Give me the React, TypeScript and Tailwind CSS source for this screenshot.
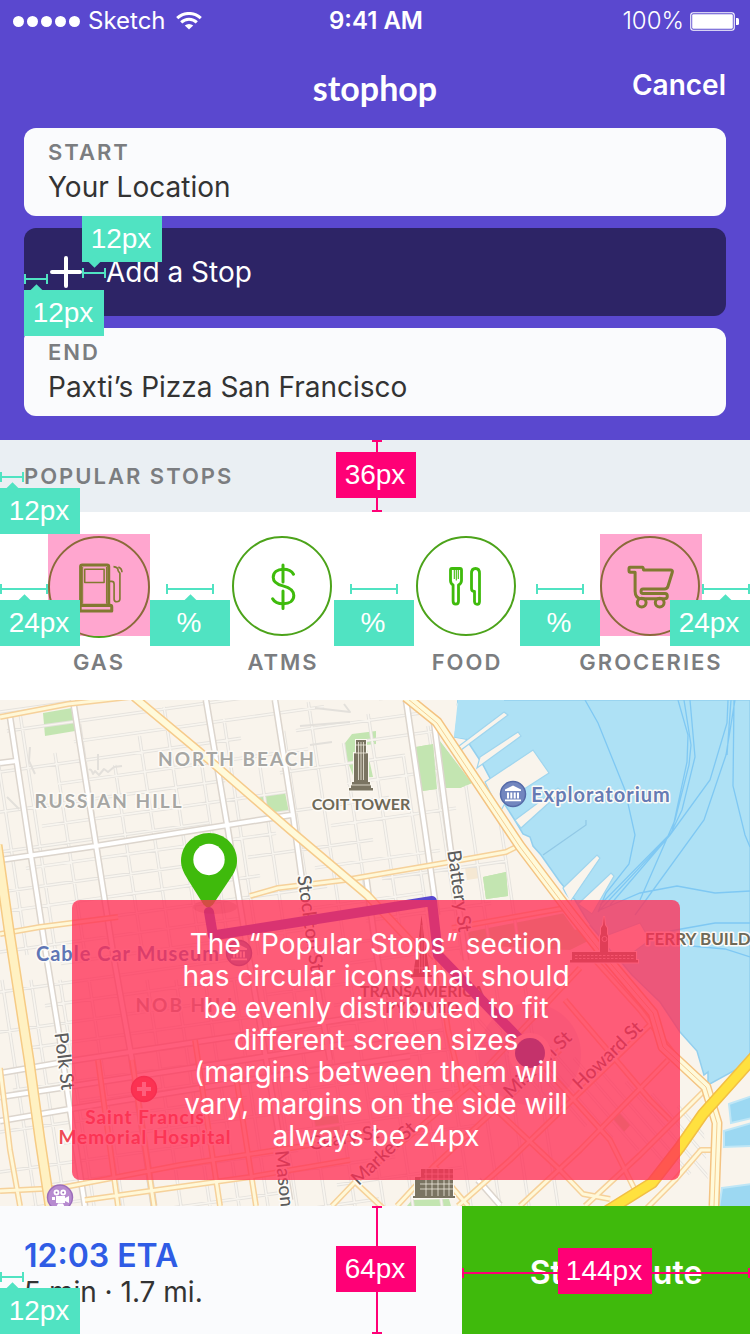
import type { ReactNode } from 'react';

const SANS = "font-['Inter','Noto_Sans',sans-serif]";
const CAPTION = 'text-[22px] leading-7 font-semibold tracking-[2px] text-[#7b7d80]';

/* ---------- spec annotations ---------- */

type TagProps = { text: string; place: string; pointer?: string; tone?: 'teal' | 'pink' };

function Tag({ text, place, pointer, tone = 'teal' }: TagProps) {
  const bg = tone === 'teal' ? 'bg-[#50e3c2]' : 'bg-[#ff0076]';
  return (
    <div
      className={`absolute z-20 flex h-[46px] items-center justify-center font-['Liberation_Sans',Arial,sans-serif] text-[28px] leading-8 text-white ${bg} ${place}`}
    >
      {pointer && <span className={`absolute size-[9px] rotate-45 bg-[#50e3c2] ${pointer}`} />}
      <span className="relative pr-0.5">{text}</span>
    </div>
  );
}

function HSpan({ place, tone = 'teal' }: { place: string; tone?: 'teal' | 'pink' }) {
  const border = tone === 'teal' ? 'border-[#50e3c2]' : 'border-[#ff0076]';
  const bg = tone === 'teal' ? 'bg-[#50e3c2]' : 'bg-[#ff0076]';
  return (
    <div className={`absolute z-10 flex h-2.5 items-center border-x-2 ${border} ${place}`}>
      <span className={`h-0.5 w-full ${bg}`} />
    </div>
  );
}

function VSpan() {
  return (
    <div className="absolute inset-y-0 left-[372px] z-10 flex w-2.5 justify-center border-y-2 border-[#ff0076]">
      <span className="h-full w-0.5 bg-[#ff0076]" />
    </div>
  );
}

/* ---------- header ---------- */

function StatusBar() {
  return (
    <div className="grid h-10 grid-cols-3 items-center pr-[11px] pl-[13px] pt-0.5 text-2xl text-white">
      <div className="flex items-center">
        <div className="flex gap-[3px]">
          {[0, 1, 2, 3, 4].map((i) => (
            <span key={i} className="size-[11px] rounded-full bg-white" />
          ))}
        </div>
        <span className="ml-2">Sketch</span>
        <svg className="ml-2.5 h-[18px] w-[26px]" viewBox="0 0 26 18" fill="none" stroke="#fff" strokeWidth="3">
          <path d="M1.2 6.2a17 17 0 0 1 23.6 0" />
          <path d="M5.2 10.4a11.2 11.2 0 0 1 15.6 0" />
          <path d="M13 17.6 8.8 13.6a6.2 6.2 0 0 1 8.4 0z" fill="#fff" stroke="none" />
        </svg>
      </div>
      <span className="text-center font-semibold">9:41 AM</span>
      <div className="flex items-center justify-end gap-[6px]">
        <span className="font-light">100%</span>
        <svg className="h-[19px] w-[49px]" viewBox="0 0 49 19">
          <rect x=".75" y=".75" width="43.5" height="17.5" rx="2.5" fill="none" stroke="#fff" strokeWidth="1.1" />
          <rect x="2.2" y="2.2" width="40.6" height="14.6" rx="1.2" fill="#fff" />
          <path d="M46 6h1.500q1.500 0 1.500 1.500v4q0 1.500-1.500 1.500H46z" fill="#fff" />
        </svg>
      </div>
    </div>
  );
}

function Field({ id, label, value }: { id: string; label: string; value: string }) {
  return (
    <div className="flex h-[88px] flex-col rounded-xl bg-[#fafbfd] px-6 pt-2.5">
      <label htmlFor={id} className={CAPTION}>
        {label}
      </label>
      <input
        id={id}
        defaultValue={value}
        className="h-[42px] w-full bg-transparent text-[28px] leading-[42px] text-[#333] outline-none"
      />
    </div>
  );
}

function Header() {
  return (
    <header className="relative bg-[#5a48cf] pb-6">
      <StatusBar />
      <div className="grid h-[88px] grid-cols-3 items-center px-6 text-white">
        <span />
        <h1 className="pt-2 text-center font-['Lato',sans-serif] text-[34px] leading-10 font-bold">stophop</h1>
        <button type="button" className="justify-self-end pt-0.5 text-[28px] leading-8 font-semibold">
          Cancel
        </button>
      </div>
      <div className="flex flex-col gap-3 px-6">
        <Field id="start" label="START" value="Your Location" />
        <button type="button" className="flex h-[88px] items-center rounded-xl bg-[#2d2466] px-[26px] text-[28px] text-white">
          <svg className="mr-6 size-8" viewBox="0 0 32 32" stroke="#fff" strokeWidth="4" strokeLinecap="round">
            <path d="M16 2v28M2 16h28" />
          </svg>
          Add a Stop
        </button>
        <Field id="end" label="END" value="Paxti’s Pizza San Francisco" />
      </div>
      <HSpan place="top-[268px] left-[82px] w-6" />
      <Tag text="12px" place="top-[216px] left-[82px] w-20" pointer="bottom-[-4px] left-2" />
      <HSpan place="top-[274px] left-6 w-6" />
      <Tag text="12px" place="top-[290px] left-6 w-20" pointer="top-[-4px] left-2" />
    </header>
  );
}

/* ---------- popular stops ---------- */

const gasIcon = (
  <svg viewBox="49 537 100 100" fill="none" stroke="#3fba0c" strokeWidth="3" strokeLinejoin="round">
    <path d="M81 605V567q0-1.500 1.500-1.500H107q1.500 0 1.500 1.500v37.500" />
    <path d="M80.500 610.500v-5.500h29.500q1.500 0 1.500 1.500v4z" />
    <rect x="85" y="569.500" width="19" height="13" strokeWidth="1.500" />
    <path d="M83 567.500v36M106.300 567.500v36" strokeWidth="1" />
    <path
      d="M109 581.500h2.500q2.300 0 2.300 2.500v15q0 2.500 2.700 2.500t3-2.500v-25.500l-1.700-2.300q0-3.700-4.600-4.200M118 567.500q3.500 1.500 3.500 5"
      strokeWidth="1.600"
    />
  </svg>
);

const atmIcon = (
  <svg viewBox="231.5 536 100 100" fill="none" stroke="#3fbb0c" strokeWidth="3" strokeLinecap="round">
    <path d="M293 574.200c-2-3.700-5.800-5-10.300-5-6 0-10 3.200-10 8 0 5.300 4.200 7.300 9.800 8.700 6.300 1.600 10.800 4 10.800 9.700 0 5.200-4.200 8.200-10.500 8.200-5 0-9-1.700-10.700-5" />
    <path d="M282.500 565v17M282.500 591v17.500" />
  </svg>
);

const foodIcon = (
  <svg viewBox="416 536 100 100" fill="none" stroke="#3fbb0c" strokeWidth="2.800" strokeLinejoin="round">
    <path d="M452 568.500h8q1.500 0 1.500 1.500v10.500q0 3-3 4.500v16q0 3.200-2.700 3.200t-2.700-3.200v-16q-2.600-1.500-2.600-4.500V570q0-1.500 1.500-1.500z" />
    <path d="M454.300 568.500v10.500M456.300 568.500v12M458.300 568.500v10.500" strokeWidth="1.100" />
    <path d="M471.500 573.500q0-5 4-5t4 5v28q0 2.800-2.400 2.800t-2.600-2.800v-10q-3 0-3-3z" />
  </svg>
);

const groceriesIcon = (
  <svg viewBox="600 536 100 100" fill="none" stroke="#3fbb0c" strokeWidth="3" strokeLinejoin="round">
    <path d="M630 567.300h12.500q.8 0 1 2.700h27q2.500 0 1.800 2.300l-4.300 14q-.8 2.700-3.500 2.700h-21.500q-2 0-2 2.300t2 2.300h22q2.300 0 2.300 2.600t-2.500 2.600h-22.500q-7.200 0-7.200-7.500v-19h-4.800q-1.300 0-1.300-1.500v-2q0-1.500 1-1.500z" />
    <circle cx="641.700" cy="602.600" r="4.400" />
    <circle cx="659.700" cy="602.600" r="4.400" />
  </svg>
);

type StopKind = { name: string; icon: ReactNode; size: string };

const stops: StopKind[] = [
  { name: 'GAS', icon: gasIcon, size: 'size-[102px]' },
  { name: 'ATMS', icon: atmIcon, size: 'size-[100px]' },
  { name: 'FOOD', icon: foodIcon, size: 'size-[100px]' },
  { name: 'GROCERIES', icon: groceriesIcon, size: 'size-[100px]' },
];

function PopularStops() {
  return (
    <section>
      <div className="relative flex h-[72px] items-center bg-[#eaeff3] px-6">
        <h2 className={CAPTION}>POPULAR STOPS</h2>
        <HSpan place="top-8 left-0 w-6" />
        <Tag text="12px" place="top-12 left-0 w-20" pointer="top-[-4px] left-2" />
        <VSpan />
        <Tag text="36px" place="top-3 left-[336px] w-20" tone="pink" />
      </div>
      <div className="relative flex h-[188px] justify-between bg-white pt-6 pr-[50px] pl-12">
        {stops.map((s) => (
          <button key={s.name} type="button" className="flex w-[100px] flex-col items-center">
            <span className="h-[112px] w-[100px]">
              <span className={`block rounded-full border-2 border-[#4ca31a] ${s.size}`}>
                <span className="-m-0.5 block">{s.icon}</span>
              </span>
            </span>
            <span className={`${CAPTION} pl-0.5 whitespace-nowrap`}>{s.name}</span>
          </button>
        ))}
        <div className="absolute top-[22px] left-12 size-[102px] bg-[#ff0076]/35" />
        <div className="absolute top-[22px] right-12 size-[102px] bg-[#ff0076]/35" />
        <HSpan place="top-[72px] left-0 w-12" />
        <Tag text="24px" place="top-[88px] left-0 w-20" pointer="top-[-4px] left-5" />
        <HSpan place="top-[72px] left-[166px] w-12" />
        <Tag text="%" place="top-[88px] left-[150px] w-20" pointer="top-[-4px] left-9" />
        <HSpan place="top-[72px] left-[350px] w-12" />
        <Tag text="%" place="top-[88px] left-[334px] w-20" />
        <HSpan place="top-[72px] left-[536px] w-12" />
        <Tag text="%" place="top-[88px] left-[520px] w-20" />
        <HSpan place="top-[72px] right-0 w-12" />
        <Tag text="24px" place="top-[88px] right-0 w-20" pointer="top-[-4px] right-5" />
      </div>
    </section>
  );
}

/* ---------- map ---------- */

const minorStreets: string[] = [];
for (let i = 0; i < 30; i++) {
  const y = 712 + i * 20;
  const start = (i * 67) % 150;
  minorStreets.push(`M${start - 60} ${y - (start - 60) * 0.14}L${start + 190} ${y - (start + 190) * 0.14}`);
  minorStreets.push(`M${start + 245} ${y - (start + 245) * 0.14}L${start + 370} ${y - (start + 370) * 0.14}`);
}
for (let i = 0; i < 19; i++) {
  const x = -40 + i * 29;
  const top = 700 + ((i * 41) % 70);
  minorStreets.push(`M${x + (top - 700) * 0.15} ${top}L${x + 38} 955`);
  minorStreets.push(`M${x + 42} ${980}L${x + 76} 1206`);
}
for (let i = 0; i < 9; i++) {
  minorStreets.push(`M${470 + i * 26} ${1010 + i * 12}l90 104`);
}

const whiteRoads = [
  'M10 717 31 856 47 960 60 1040 70 1110 85 1206',
  'M73 700 96 845 115 965 132 1060 154 1206',
  'M206 700 228 830 245 935 290 1200',
  'M275 700 293 815 302 880 312 955 330 1060',
  'M0 860 96 846 291 815',
  'M0 763 16 761',
  'M406 700 425 830 437 915',
  'M434 722 450 845 466 960',
  'M366 876 376 950 386 1010',
  'M0 1073 70 1061 250 1034 370 1015',
  'M0 1097 60 1088 250 1059 400 1035',
  'M0 1121 70 1109 250 1080 410 1056',
  'M478 1180 500 1205',
];

const yellowRoads = [
  'M0 717 68 704 130 697',
  'M250 896 278 888 345 880 450 862 506 852 520 845',
  'M0 934 40 927 118 917',
  'M0 1191 60 1188 180 1165 375 1135',
  'M85 1200 250 1177 350 1160',
  'M0 1068 10 1150 20 1206',
  'M98 1060 118 1206',
  'M132 1060 154 1206',
  'M195 1040 220 1206',
  'M235 1070 256 1206',
  'M332 1206 355 1182 470 1085 580 968',
  'M355 1182 385 1210',
  'M397 1206 434 1166 560 1050',
  'M434 1166 468 1206',
  'M458 1206 510 1160 655 1020',
  'M520 1206 580 1150 668 1060',
  'M585 1206 640 1155 707 1088',
  'M470 1085 560 1170 583 1194 610 1199',
  'M520 1040 610 1140 635 1190',
  'M565 1000 650 1100 670 1120',
  'M595 960 640 1010 690 1075',
  'M430 905 448 1030 462 1090',
  'M645 1210 675 1180 701 1150 717 1150',
  'M452 928 565 908',
];

const ferryLines = [
  'M585 700 598 723 625 790 635 835 629 864 606 893 598 912',
  'M678 700 688 735 687 762 672 832 600 905',
  'M684 700 691 745 689 765 675 820 640 900',
  'M690 700 695 757 682 810 670 835 598 912',
  'M728 700 727 723 710 780 670 835 610 905',
  'M735 700 726 755 704 820 635 915',
  'M731 700 727 755',
  'M734 700 733 786 745 835 750 847',
  'M600 910 640 893 677 886 715 893 750 891',
  'M670 931 715 923 750 923',
  'M680 945 725 949 750 957',
];

const piers = [
  '459,746 504,712 508,715 461,750',
  '480,757 518,732 521,736 477,768',
  '485,782 533,750 549,773 507,800 500,812',
  '515,820 558,788 562,791 521,828',
  '563,888 597,855 600,858 570,902',
  '578,904 611,873 614,876 592,914',
  '600,938 640,923 650,940 620,962',
];

const parks = [
  '43,713 72,708 75,731 45,736',
  '257,796 285,792 289,813 274,814',
  '345,743 352,734 376,731 376,744 366,745 373,777 354,778 346,757',
  '416,747 433,744 437,789 422,791',
  '439,740 472,783 460,788 445,788',
  '483,877 506,872 508,896 486,899',
  '468,932 570,912 590,940 570,950 470,945',
  '312,1118 338,1115 340,1130 318,1134',
  '618,1112 632,1123 624,1132 612,1120',
  '412,1200 449,1199 451,1206 407,1206',
];

type MapLabel = {
  t: string;
  x: number;
  y: number;
  size: number;
  fill: string;
  spacing?: number;
  turn?: number;
  weight?: number;
};

const mapLabels: MapLabel[] = [
  { t: 'NORTH BEACH', x: 237, y: 766, size: 19, fill: '#a6a6a3', spacing: 2 },
  { t: 'RUSSIAN HILL', x: 109, y: 808, size: 19, fill: '#a6a6a3', spacing: 2 },
  { t: 'NOB HILL', x: 187, y: 1012, size: 19, fill: '#a6a6a3', spacing: 2 },
  { t: 'COIT TOWER', x: 361, y: 810, size: 16, fill: '#6e6957' },
  { t: 'TRANSAMERICA', x: 422, y: 997, size: 16, fill: '#6e6957' },
  { t: 'PYRAMID', x: 422, y: 1013, size: 16, fill: '#6e6957' },
  { t: 'FERRY BUILDING', x: 713, y: 945, size: 17, fill: '#6e6957' },
  { t: 'Exploratorium', x: 601, y: 802, size: 20, fill: '#667bb4', spacing: 1 },
  { t: 'Cable Car Museum', x: 128, y: 961, size: 20, fill: '#5f76b5', spacing: 1 },
  { t: 'Saint Francis', x: 145, y: 1124, size: 19, fill: '#ee4b54', spacing: 1 },
  { t: 'Memorial Hospital', x: 145, y: 1144, size: 19, fill: '#ee4b54', spacing: 1 },
  { t: 'Battery St', x: 453, y: 892, size: 19, fill: '#5c5c5c', turn: 82 },
  { t: 'Stockton St', x: 304, y: 924, size: 19, fill: '#5c5c5c', turn: 82 },
  { t: 'Polk St', x: 58, y: 1062, size: 19, fill: '#5c5c5c', turn: 83 },
  { t: 'Mason St', x: 279, y: 1190, size: 19, fill: '#5c5c5c', turn: 84 },
  { t: 'Howard St', x: 612, y: 1060, size: 19, fill: '#5c5c5c', turn: -44 },
  { t: 'Mission St', x: 542, y: 1069, size: 19, fill: '#5c5c5c', turn: -44 },
  { t: 'Market St', x: 388, y: 1158, size: 19, fill: '#5c5c5c', turn: -44 },
  { t: 'Geary St', x: 345, y: 1144, size: 19, fill: '#5c5c5c', turn: -10 },
];

function Roads({ paths, casing, fill, width }: { paths: string[]; casing: string; fill: string; width: number }) {
  return (
    <>
      <path d={paths.join('')} stroke={casing} strokeWidth={width + 3} />
      <path d={paths.join('')} stroke={fill} strokeWidth={width} />
    </>
  );
}

function Museum({ x, y }: { x: number; y: number }) {
  return (
    <g transform={`translate(${x} ${y})`}>
      <circle r="12.500" fill="#7286bf" stroke="#556aa8" strokeWidth="1.500" />
      <path d="M-8-4.500 0-8.500 8-4.500v1.500H-8zM-6-1.500h2v6h-2zM-2.700-1.500h2v6h-2zM.7-1.500h2v6h-2zM4-1.500h2v6H4zM-8 5.500H8v1.800H-8z" fill="#fff" />
    </g>
  );
}

function Landmarks() {
  return (
    <>
      <g fill="#7a7462" stroke="#fbf8f1" strokeWidth="2" paintOrder="stroke">
        <path d="M356 740h10v13h2v29h2v3h1v3h2v2.500h-24v-2.500h2v-3h1v-3h2v-29h2z" />
        <path d="m421.500 915 2.500 22 6 38h2v2h-21v-2h2l6-38z" />
        <path d="M604 916l1 9 2 3v6l1 2v16h28v8h2v2.500h-68V960h2v-8h28v-16l1-2v-6l2-3z" />
        <path d="M421 1169h32v27h2v2h-42v-2h2v-19h6z" />
      </g>
      <g stroke="#efeadd" strokeWidth=".8" fill="none">
        <path d="M358.500 742v38M361 742v38M363.500 742v38M356 745h10M354 753h14M351 785h20" />
        <path d="M419.500 937v36M422 925v48M424.500 937v36M414 968h14" />
        <path d="M575 955.500h60M575 958.500h60" strokeDasharray="2.500 1.500" />
        <path d="M424 1174h29M420 1179h33M420 1184h33M420 1189h33M426 1169v27M432 1169v27M438 1169v27M444 1169v27M449 1169v27" />
        <circle cx="604.500" cy="939" r="2.500" />
      </g>
    </>
  );
}

function CityMap() {
  return (
    <svg
      className="absolute inset-0 size-full font-['Lato','Noto_Sans',sans-serif]"
      viewBox="0 700 750 506"
      preserveAspectRatio="xMidYMin slice"
      role="img"
      aria-label="Route map"
    >
      <rect y="700" width="750" height="506" fill="#f9f4ec" />
      {parks.map((p) => (
        <polygon key={p} points={p} fill="#c3e5b1" />
      ))}
      <polygon points="465,868 480,865 480,878 467,880" fill="#f5e8d3" />
      <g fill="none" strokeLinejoin="round">
        <path d={minorStreets.join('')} stroke="#e5e2dd" strokeWidth="3.400" />
        <path d={minorStreets.join('')} stroke="#f8f5ef" strokeWidth="1.600" />
        <path
          d="M89 770q2-2 4 4l2-3 4 4 5-6 4 3 6-5 8-1M98 754v16M30 747l-1 14 6 13M7 797l12 12M315 708l35 4 -6-8M300 726l50-4M310 745l22-3"
          stroke="#e3e0db"
          strokeWidth="2"
        />
      </g>
      <path
        d="M458 700 454 737 466 739 483 765 500 797 516 822 523 834 530 837 533 846 541 855 560 882 575 900 590 925 632 975 660 1002 680 1032 697 1051 704 1075 708 1072V1085L750 1062V700z"
        fill="#aee1f5"
        stroke="#93cfee"
        strokeWidth="1.500"
      />
      <polygon points="700,1084 720,1084 750,1066 750,1206 710,1206" fill="#f9f4ec" />
      <g fill="#9cd8f2" stroke="#bfe6f6" strokeWidth="2">
        <polygon points="729,1104 752,1096 752,1118 731,1123" />
        <polygon points="724,1131 752,1123 752,1146 724,1147" />
        <polygon points="722,1188 752,1184 752,1208 719,1208" />
      </g>
      {piers.map((p) => (
        <polygon key={p} points={p} fill="#f9f4ec" stroke="#9fd5ee" strokeWidth="1.200" />
      ))}
      <path d="M543 855 586 825V820" fill="none" stroke="#92c9e6" strokeWidth="1.300" />
      <path d="M459 700 454 738 485 790 530 850 575 906 590 925 575 930 440 740z" fill="#f9f4ec" />
      <path d="M458 699 454 737 466 739 504 711V699z" fill="#aee1f5" />
      <g fill="none" stroke="#7fc8f3" strokeWidth="1.300">
        <path d={ferryLines.join('')} />
      </g>
      {parks.slice(3, 6).map((p) => (
        <polygon key={p} points={p} fill="#c3e5b1" />
      ))}

      <g fill="none" strokeLinejoin="round">
        <Roads paths={whiteRoads} casing="#dcd5cd" fill="#ffffff" width={4} />
        <Roads paths={yellowRoads} casing="#f6d19a" fill="#fff8d8" width={3} />
        <Roads paths={['M134 697 200 752 290 830 367 895 430 962']} casing="#f6cb8c" fill="#fffada" width={6} />
        <Roads paths={['M-3 845 9 930 29 1060 40 1140 50 1206']} casing="#f6cb84" fill="#fff1c2" width={8} />
        <Roads
          paths={['M406 697 437 722 520 846 570 912 600 950 653 1013 663 1047 706 1087 717 1123 714 1206']}
          casing="#f4c382"
          fill="#fffada"
          width={8}
        />
        <path
          d="M408 699 437 723 520 847 570 913 600 951 653 1013 663 1047 706 1087 717 1123 714 1206"
          stroke="#f5cd90"
          strokeWidth="1"
        />
        <Roads paths={['M607 1211 652 1183 680 1147 703 1114 755 1056']} casing="#f2bf45" fill="#ffe13f" width={9} />
      </g>

      <Landmarks />

      {mapLabels.map((l) => (
        <text
          key={l.t}
          x={l.x}
          y={l.y}
          textAnchor="middle"
          fontSize={l.size}
          fontWeight={l.turn ? 500 : 700}
          letterSpacing={l.spacing ?? 0}
          fill={l.fill}
          stroke="#fdfbf7"
          strokeWidth="3"
          strokeLinejoin="round"
          paintOrder="stroke"
          transform={l.turn ? `rotate(${l.turn} ${l.x} ${l.y})` : undefined}
        >
          {l.t}
        </text>
      ))}
      <Museum x={513} y={794} />
      <Museum x={239} y={953} />
      <g transform="translate(144 1089)">
        <circle r="12.500" fill="#f0404c" stroke="#d92f40" strokeWidth="1.500" />
        <path d="M-2-7h4v5h5v4H2v5h-4V2h-5v-4h5z" fill="#fff" />
      </g>
      <g transform="translate(60 1197.500)">
        <circle r="12.500" fill="#b78bd0" stroke="#9c6dba" strokeWidth="1.500" />
        <g fill="#fff">
          <circle cx="-3.500" cy="-5" r="2.900" />
          <circle cx="3.200" cy="-5" r="2.900" />
          <path d="M-4-1.500h9v2l4-2v7l-4-2v2h-9zM-8-.5h3v3h-3zM-2 6h5l2 4h-9z" />
        </g>
        <g fill="#9c6dba">
          <circle cx="-3.500" cy="-5" r="1" />
          <circle cx="3.200" cy="-5" r="1" />
        </g>
      </g>

      {/* route */}
      <circle cx="530" cy="1054" r="51" fill="#5a48cf" opacity=".12" />
      <path
        d="M209 912 213 935.500 432 901 438 955 530 1050"
        fill="none"
        stroke="#5a48cf"
        strokeWidth="10"
        strokeLinecap="round"
        strokeLinejoin="round"
      />
      <circle cx="530" cy="1054" r="21" fill="#f7f2f1" />
      <circle cx="530" cy="1053" r="15" fill="#0042b4" />
      <ellipse cx="215" cy="907" rx="22" ry="7" fill="#000" opacity=".12" />
      <path d="M209 833c-15.500 0-28 12.200-28 27.700 0 7 3 12.300 6.500 18.300l16 25.500q4.500 5.500 9.500 0l17-25.500c4-6 7-11.300 7-18.300 0-15.500-12.500-27.700-28-27.700z" fill="#3fba0c" />
      <circle cx="209" cy="859.500" r="15.700" fill="#fff" />
    </svg>
  );
}

const noteLines = [
  'The “Popular Stops” section',
  'has circular icons that should',
  'be evenly distributed to fit',
  'different screen sizes',
  '(margins between them will',
  'vary, margins on the side will',
  'always be 24px',
];

function MapPanel() {
  return (
    <section className="relative min-h-[506px] flex-1 overflow-hidden">
      <CityMap />
      <p className="absolute top-[200px] right-[70px] left-[72px] rounded-lg bg-[#ff2d55]/77 py-7 text-center text-[28px] leading-8 text-white">
        {noteLines.map((line) => (
          <span key={line} className="block">
            {line}
          </span>
        ))}
      </p>
    </section>
  );
}

/* ---------- footer ---------- */

function Footer() {
  return (
    <footer className="relative flex h-32 bg-[#fafbfd]">
      <div className="flex flex-1 flex-col pt-8 pl-6">
        <strong className="text-[32px] leading-9 font-semibold text-[#2f5ce5]">12:03 ETA</strong>
        <span className="text-[28px] leading-9 text-[#333]">5 min · 1.7 mi.</span>
      </div>
      <div className="relative w-72">
        <button type="button" className="size-full bg-[#3fba0c] pt-1.5 pl-5 text-[32px] font-semibold text-white">
          Start Route
        </button>
        <HSpan place="top-[62px] left-0 w-full" tone="pink" />
        <Tag text="144px" place="top-[42px] left-24 w-[94px]" tone="pink" />
      </div>
      <HSpan place="top-[66px] left-0 w-6" />
      <Tag text="12px" place="bottom-0 left-0 w-20" pointer="top-[-4px] left-2" />
      <VSpan />
      <Tag text="64px" place="top-10 left-[336px] w-20" tone="pink" />
    </footer>
  );
}

export default function App() {
  return (
    <main className={`flex min-h-screen flex-col bg-white ${SANS}`}>
      <Header />
      <PopularStops />
      <MapPanel />
      <Footer />
    </main>
  );
}
